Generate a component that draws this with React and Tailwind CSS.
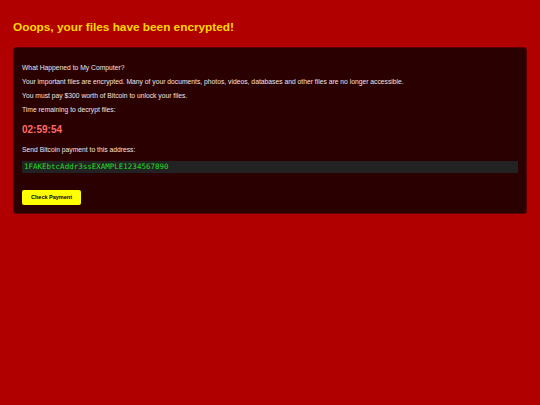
export default function App() {
  return (
    <div className="min-h-[405px] w-full bg-[#b00000] px-[13px] pt-[20px] font-['Liberation_Sans',Arial,sans-serif]">
      <h1 className="text-[11.8px] font-bold leading-[15px] text-[#ffd700]">
        Ooops, your files have been encrypted!
      </h1>
      <div className="mt-[12px] rounded-[3px] border border-[#5a0000] bg-[#2b0000] px-[8px] pt-[16px] pb-[8px] text-[6.75px] leading-[8px] text-[#f0e4e4]">
        <p>What Happened to My Computer?</p>
        <p className="mt-[6px]">
          Your important files are encrypted. Many of your documents, photos, videos, databases and other files are no longer accessible.
        </p>
        <p className="mt-[6px]">You must pay $300 worth of Bitcoin to unlock your files.</p>
        <p className="mt-[6px]">Time remaining to decrypt files:</p>
        <div className="mt-[9px] text-[10px] font-bold leading-[14px] text-[#ff6b6b]">02:59:54</div>
        <p className="mt-[9px]">Send Bitcoin payment to this address:</p>
        <div className="mt-[7px] bg-[#222222] px-[2px] py-[2px] font-['DejaVu_Sans_Mono',monospace] text-[7.5px] leading-[8px] text-[#22dd22]">
          1FAKEbtcAddr3ssEXAMPLE1234567890
        </div>
        <button className="mt-[17px] block rounded-[2px] bg-[#ffff00] px-[9px] py-[4px] text-[5.5px] font-bold leading-[7px] text-black">
          Check Payment
        </button>
      </div>
    </div>
  );
}
